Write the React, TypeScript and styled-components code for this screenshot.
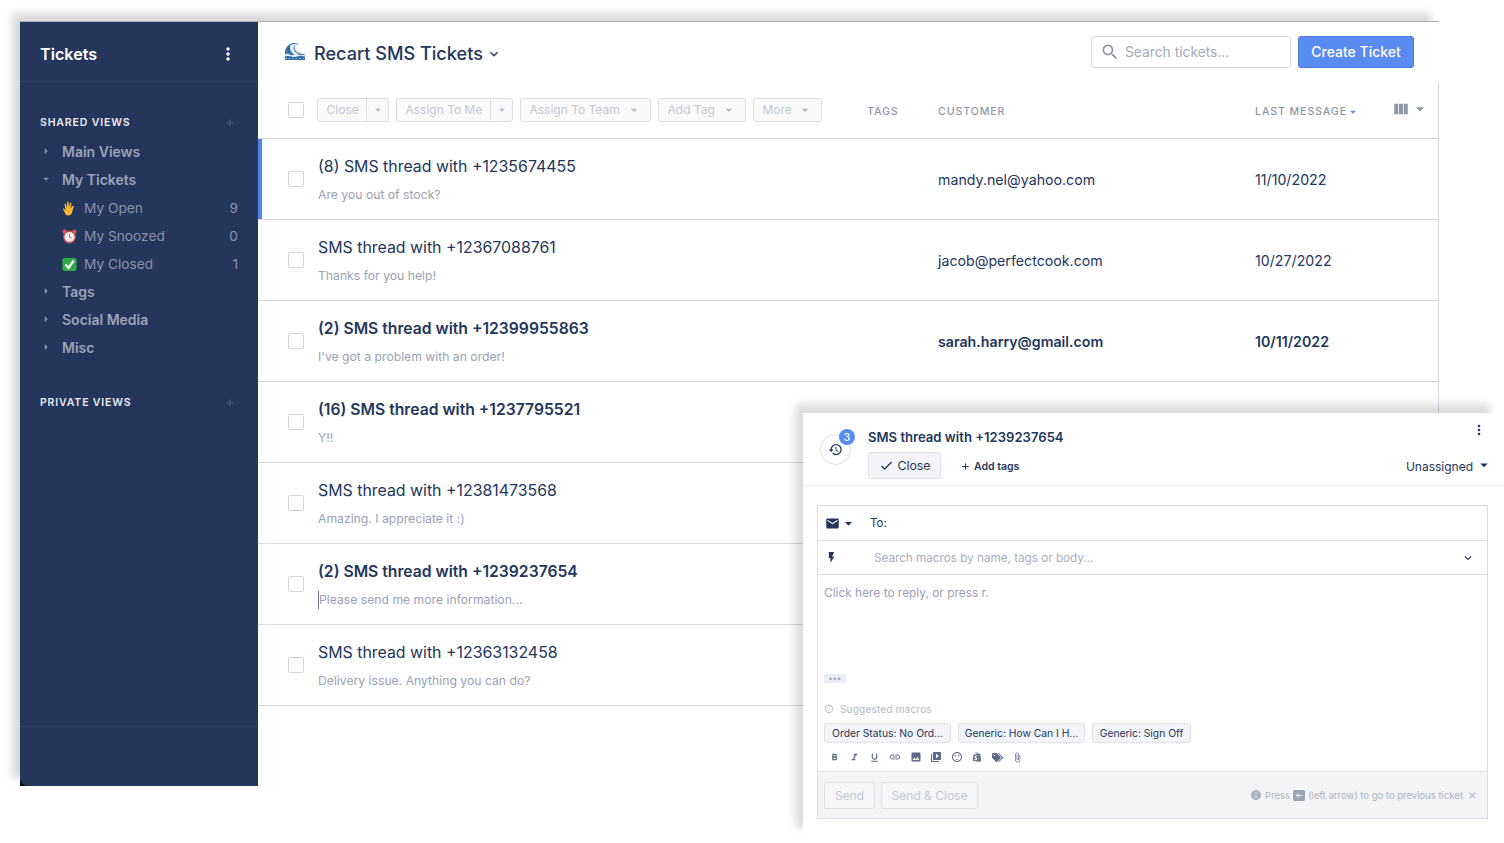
import React from "react";
import styled, { createGlobalStyle } from "styled-components";
import { FaShopify, FaTags } from "react-icons/fa";
import {
  MdAdd,
  MdArrowDropDown,
  MdAttachFile,
  MdCheck,
  MdClose,
  MdEmail,
  MdFlashOn,
  MdFormatBold,
  MdFormatItalic,
  MdFormatUnderlined,
  MdHistory,
  MdImage,
  MdInfo,
  MdInfoOutline,
  MdKeyboardArrowDown,
  MdLink,
  MdMoreVert,
  MdSearch,
  MdSentimentSatisfied,
  MdVideoLibrary,
  MdViewColumn,
} from "react-icons/md";

const tickets = [
  { subject: "(8) SMS thread with +1235674455", preview: "Are you out of stock?", customer: "mandy.nel@yahoo.com", date: "11/10/2022", active: true },
  { subject: "SMS thread with +12367088761", preview: "Thanks for you help!", customer: "jacob@perfectcook.com", date: "10/27/2022" },
  { subject: "(2) SMS thread with +12399955863", preview: "I've got a problem with an order!", customer: "sarah.harry@gmail.com", date: "10/11/2022", unread: true },
  { subject: "(16) SMS thread with +1237795521", preview: "Y!!", customer: "", date: "", unread: true },
  { subject: "SMS thread with +12381473568", preview: "Amazing. I appreciate it :)", customer: "", date: "" },
  { subject: "(2) SMS thread with +1239237654", preview: "Please send me more information...", customer: "", date: "", unread: true, typing: true },
  { subject: "SMS thread with +12363132458", preview: "Delivery issue. Anything you can do?", customer: "", date: "" },
];

const GlobalStyle = createGlobalStyle`
  html, body {
    margin: 0;
    padding: 0;
    background: #fff;
    font-family: Inter, "Liberation Sans", sans-serif;
  }
  * { box-sizing: border-box; }
`;

const Page = styled.div`
  position: relative;
  width: 1504px;
  height: 843px;
  overflow: hidden;
  padding: 21px 0 0 20px;
  background: #fff;
`;

const Frame = styled.div`
  display: flex;
  width: 1419px;
  height: 765px;
  box-shadow: -8px -8px 8px rgba(0, 0, 0, 0.15);
`;

const SidebarShell = styled.div`
  width: 238px;
  flex: none;
  display: flex;
  background: #05070d;
`;

const Sidebar = styled.aside`
  flex: 1;
  display: flex;
  flex-direction: column;
  background: #24365b;
  border-bottom-left-radius: 8px;
  border-top: 1px solid #a9adb6;
`;

const SideHeader = styled.div`
  height: 60px;
  flex: none;
  display: flex;
  align-items: center;
  justify-content: space-between;
  padding: 5px 20px 0;
  border-bottom: 1px solid #2d3f65;
  color: #fff;
  font-size: 16.2px;
  font-weight: 600;
  svg { margin-top: -1px; }
`;

const SideBody = styled.div`
  flex: 1;
  padding: 28px 20px 0;
`;

const SideSection = styled.div`
  margin-bottom: 29px;
`;

const SectionTitle = styled.div`
  display: flex;
  justify-content: space-between;
  align-items: center;
  height: 24px;
  margin-bottom: 3px;
  color: #e9ecf2;
  font-size: 10.5px;
  font-weight: 600;
  letter-spacing: 0.85px;
  svg { color: #4f5f80; margin-right: 2px; margin-top: 2px; }
`;

const NavGroup = styled.div`
  display: flex;
  align-items: center;
  height: 28px;
  color: #9aa4b7;
  font-size: 14px;
  font-weight: 600;
  svg { width: 14px; height: 14px; margin-left: -1px; margin-right: 9px; color: #8793a8; flex: none; }
`;

const Caret = styled(MdArrowDropDown)<{ $closed?: boolean }>`
  transform: ${(p) => (p.$closed ? "rotate(-90deg)" : "none")};
`;

const NavItem = styled.div`
  display: flex;
  align-items: center;
  height: 28px;
  padding: 2px 0 0 22px;
  color: #8793a8;
  font-size: 13.7px;
  svg { flex: none; margin-right: 7px; }
`;

const NavCount = styled.span`
  margin-left: auto;
`;

const SideFooter = styled.div`
  height: 60px;
  flex: none;
  border-top: 1px solid #2d3f65;
`;

const Main = styled.main`
  flex: 1;
  display: flex;
  flex-direction: column;
  background: #fff;
  border-top: 1px solid #a9adb6;
`;

const TopBar = styled.header`
  height: 61px;
  flex: none;
  display: flex;
  align-items: center;
  padding: 0 25px 2px 27px;
`;

const Title = styled.h1`
  margin: 3px 0 0 9px;
  color: #24365b;
  font-size: 18.1px;
  font-weight: 500;
`;

const TitleChevron = styled(MdKeyboardArrowDown)`
  color: #24365b;
  margin-left: 3px;
  margin-top: 5px;
`;

const Search = styled.div`
  margin-left: auto;
  width: 200px;
  height: 32px;
  display: flex;
  align-items: center;
  gap: 5px;
  padding-left: 8px;
  border: 1px solid #d5d8e1;
  border-radius: 3px;
  color: #a3a9b8;
  font-size: 13.8px;
  svg { color: #8d94a5; }
`;

const CreateButton = styled.button`
  width: 116px;
  height: 32px;
  margin-left: 7px;
  padding: 0;
  background: #5a8bf1;
  border: 1px solid #4a78e0;
  border-radius: 3px;
  color: #fff;
  font: 500 14px Inter, sans-serif;
`;

const Table = styled.div`
  flex: 1;
  border-right: 1px solid #d5d7e0;
  width: 1181px;
`;

const Toolbar = styled.div`
  height: 56px;
  display: flex;
  align-items: center;
  padding: 0 0 2px 30px;
  border-bottom: 1px solid #d5d7e0;
`;

const CheckBox = styled.span`
  display: block;
  flex: none;
  width: 16px;
  height: 16px;
  background: #fff;
  border: 1px solid #d2d5de;
  border-radius: 2px;
`;

const ActionGroup = styled.div`
  display: flex;
  flex: none;
  gap: 7px;
  margin-left: 13px;
  width: 550px;
`;

const Action = styled.div<{ $width: number }>`
  width: ${(p) => p.$width}px;
  height: 24px;
  display: flex;
  align-items: center;
  background: #fafafb;
  border: 1px solid #dcdde5;
  border-radius: 3px;
  color: #c3c7d1;
  font-size: 12px;
`;

const ActionLabel = styled.span`
  flex: 1;
  padding-left: 8.5px;
  display: flex;
  align-items: center;
  white-space: nowrap;
  svg { margin-left: auto; margin-right: 8px; color: #b4b8c4; }
`;

const ActionSplit = styled.span`
  width: 22px;
  flex: none;
  height: 22px;
  display: flex;
  align-items: center;
  justify-content: center;
  border-left: 1px solid #dcdde5;
  color: #b4b8c4;
`;

const HeadCell = styled.span<{ $width: number }>`
  width: ${(p) => p.$width}px;
  flex: none;
  display: flex;
  align-items: center;
  margin-top: 4px;
  color: #8f97a9;
  font-size: 10.6px;
  font-weight: 500;
  letter-spacing: 0.9px;
`;

const SortCaret = styled(MdArrowDropDown)`
  color: #5a8bf1;
  margin-left: -1px;
`;

const ColumnTools = styled.div`
  display: flex;
  align-items: center;
  color: #8f97a9;
  margin-top: -1px;
  margin-left: -2px;
`;

const Row = styled.div<{ $active?: boolean; $unread?: boolean }>`
  height: 81px;
  display: grid;
  grid-template-columns: 60px 620px 317px 1fr;
  align-items: center;
  border-bottom: 1px solid #d5d7e0;
  color: #24365b;
  font-weight: ${(p) => (p.$unread ? 600 : 400)};
  box-shadow: ${(p) => (p.$active ? "inset 4px 0 0 #4a85ea" : "none")};
`;

const RowCheck = styled(CheckBox)`
  margin-left: 30px;
`;

const RowText = styled.div`
  margin-top: 2px;
`;

const Subject = styled.div<{ $unread?: boolean }>`
  font-size: ${(p) => (p.$unread ? "15.7px" : "15.9px")};
  line-height: 20px;
`;

const Preview = styled.div<{ $typing?: boolean }>`
  margin-top: 9px;
  height: 18px;
  color: #9aa1b1;
  font-size: 12.2px;
  font-weight: 400;
  line-height: 18px;
  border-left: ${(p) => (p.$typing ? "1px solid #6b7488" : "0")};
`;

const Cell = styled.div`
  font-size: 14.2px;
`;

const Panel = styled.section`
  position: absolute;
  left: 803px;
  top: 413px;
  width: 701px;
  height: 430px;
  padding: 0 16px 0 14px;
  background: #fff;
  box-shadow: -11px -12px 8px -3px rgba(0, 0, 0, 0.14);
`;

const PanelHeader = styled.div`
  height: 73px;
  margin: 0 -16px 19px -14px;
  padding: 14px 16px 0 17px;
  display: flex;
  border-bottom: 1px solid #f0f1f4;
`;

const HistoryCircle = styled.div`
  position: relative;
  width: 31px;
  height: 31px;
  margin-top: 7px;
  flex: none;
  display: flex;
  align-items: center;
  justify-content: center;
  border: 1px solid #dfe1e7;
  border-radius: 50%;
  color: #24365b;
`;

const Badge = styled.span`
  position: absolute;
  top: -6px;
  right: -5px;
  width: 16px;
  height: 16px;
  display: flex;
  align-items: center;
  justify-content: center;
  border-radius: 50%;
  background: #5a8bf1;
  color: #fff;
  font-size: 10px;
  font-weight: 500;
`;

const PanelMain = styled.div`
  flex: 1;
  margin-left: 17px;
  display: flex;
  flex-direction: column;
`;

const PanelTitleRow = styled.div`
  display: flex;
  justify-content: space-between;
  align-items: flex-start;
  height: 25px;
  color: #24365b;
  font-size: 13.1px;
  font-weight: 600;
  line-height: 20px;
  svg { margin-right: 1px; margin-top: -5px; }
`;

const PanelActions = styled.div`
  display: flex;
  align-items: center;
  color: #24365b;
`;

const CloseButton = styled.div`
  width: 73px;
  height: 27px;
  display: flex;
  align-items: center;
  justify-content: center;
  gap: 4px;
  background: #f3f4f7;
  border: 1px solid #dfe1e7;
  border-radius: 3px;
  font-size: 12.3px;
`;

const AddTags = styled.div`
  display: flex;
  align-items: center;
  gap: 3px;
  margin: 1px 0 0 19px;
  font-size: 10.5px;
  font-weight: 600;
`;

const Assignee = styled.div`
  display: flex;
  align-items: center;
  margin: 1px -5px 0 auto;
  font-size: 12px;
  svg { margin-left: 2px; margin-top: -2px; }
`;

const Composer = styled.div`
  height: 314px;
  display: flex;
  flex-direction: column;
  border: 1px solid #dcdee6;
`;

const ComposerLine = styled.div<{ $tall?: boolean }>`
  height: ${(p) => (p.$tall ? 35 : 34)}px;
  flex: none;
  display: flex;
  align-items: center;
  padding: 0 12px 0 7px;
  border-bottom: 1px solid #dcdee6;
  color: #24365b;
`;

const LineIcon = styled.div`
  width: 45px;
  display: flex;
  align-items: center;
  flex: none;
`;

const ToLabel = styled.span`
  font-size: 11.5px;
`;

const MacroSearch = styled.span`
  color: #a8adbb;
  font-size: 11.7px;
  margin-left: 4px;
`;

const MacroChevron = styled(MdKeyboardArrowDown)`
  margin-left: auto;
`;

const ReplyArea = styled.div`
  flex: 1;
  display: flex;
  flex-direction: column;
  padding: 10px 6px 0;
`;

const ReplyHint = styled.div`
  height: 16px;
  color: #9aa1b1;
  font-size: 11.9px;
  line-height: 16px;
`;

const QuoteChip = styled.div`
  width: 22px;
  height: 9px;
  margin-top: 73px;
  display: flex;
  align-items: center;
  justify-content: center;
  background: #e9edf9;
  border-radius: 1px;
  color: #a0a7bb;
  font-size: 8px;
  font-weight: 700;
  letter-spacing: 0.5px;
  line-height: 9px;
`;

const SuggestedLabel = styled.div`
  margin-top: 20px;
  height: 12px;
  display: flex;
  align-items: center;
  gap: 6px;
  color: #b4b9c6;
  font-size: 10px;
  letter-spacing: 0.2px;
`;

const MacroRow = styled.div`
  display: flex;
  gap: 7px;
  margin-top: 8px;
`;

const MacroChip = styled.span<{ $width: number }>`
  width: ${(p) => p.$width}px;
  height: 20px;
  display: flex;
  align-items: center;
  justify-content: center;
  background: #f3f4f7;
  border: 1px solid #dfe1e7;
  border-radius: 3px;
  color: #24365b;
  font-size: 10.3px;
  white-space: nowrap;
`;

const FormatBar = styled.div`
  display: flex;
  align-items: center;
  margin-top: 5px;
  height: 18px;
  color: #5d6a85;
`;

const FormatSlot = styled.span`
  width: 20.4px;
  display: flex;
  justify-content: center;
  flex: none;
`;

const ComposerFooter = styled.div`
  height: 47px;
  flex: none;
  display: flex;
  align-items: center;
  padding: 0 9px 0 6px;
  background: #f3f4f6;
  border-top: 1px solid #dcdee6;
`;

const GhostButton = styled.div<{ $width: number }>`
  width: ${(p) => p.$width}px;
  height: 27px;
  margin-right: 6px;
  display: flex;
  align-items: center;
  justify-content: center;
  border: 1px solid #dfe1e7;
  border-radius: 3px;
  background: #f5f6f8;
  color: #c6cad4;
  font-size: 12px;
`;

const ShortcutHint = styled.div`
  margin-left: auto;
  display: flex;
  align-items: center;
  color: #adb3c1;
  font-size: 9.5px;
  gap: 3px;
`;

const HintClose = styled(MdClose)`
  margin-left: 1px;
`;

const KeyCap = styled.span`
  width: 12px;
  height: 11px;
  display: flex;
  align-items: center;
  justify-content: center;
  background: #9aa2b3;
  border-radius: 2px;
  color: #fff;
  font-size: 8px;
  line-height: 8px;
`;

function WaveEmoji() {
  return (
    <svg width="20" height="17" viewBox="0 0 20 17">
      <path d="M0 17V8C1 3 5 0 9 0c2 0 4 .6 5 1.500-2.500-.3-4.500 1-4.500 3.200 0 3 3.500 5 6 5.800l4.500.8V17z" fill="#3b78ad" />
      <path d="M5 2.500C7 .8 10 .5 13 1.300 10.500 1.500 8.500 3 8.500 5c0 3 2.500 5 5 6l-3 .8C6.500 10.500 4 6 5 2.500z" fill="#e6eef5" />
      <path d="M2 7c1-2 2-3 3-4 0 2-.5 4 0 6z" fill="#1f5b96" />
      <path d="M0 11.500c1.500-1 3-1 4.500 0s3 1 4.500 0 3-1 4.500 0 3.500 1 6.500 0V14H0z" fill="#dce8f2" />
      <path d="M0 13.500c2-.8 4-.8 6 0s4 .8 6 0 5-.8 8 0V17H0z" fill="#2b6aa3" />
      <path d="M0 15.500h20" stroke="#b9d2e8" strokeWidth="0.700" strokeDasharray="2 1.500" />
    </svg>
  );
}

function HandEmoji() {
  return (
    <svg width="15" height="15" viewBox="0 0 15 15">
      <path
        d="M4 14 1.200 8.600c-.4-.8.7-1.400 1.200-.7l1.300 1.800L2.500 3.300c-.2-.9 1-1.200 1.300-.3l1.100 3.600L5.200 1.200c0-.9 1.300-.9 1.400 0l.5 5.100 1-4.300c.2-.9 1.400-.6 1.300.3l-.7 5 1.900-2.200c.6-.7 1.600.1 1.100.9L9.800 12c-.6 1-1.200 2-2.500 2.300-1.200.3-2.500.2-3.300-.3z"
        fill="#f7b733"
      />
    </svg>
  );
}

function ClockEmoji() {
  return (
    <svg width="15" height="15" viewBox="0 0 15 15">
      <circle cx="2.700" cy="2.800" r="2.200" fill="#d9564f" />
      <circle cx="12.300" cy="2.800" r="2.200" fill="#d9564f" />
      <circle cx="7.500" cy="8" r="6.500" fill="#c9534e" />
      <circle cx="7.500" cy="8" r="5" fill="#efeaea" />
      <path d="M7.500 4.800V8l2.200 1" stroke="#666" strokeWidth="0.800" fill="none" />
    </svg>
  );
}

function CheckEmoji() {
  return (
    <svg width="15" height="15" viewBox="0 0 15 15">
      <rect x="0.500" y="1" width="14" height="13" rx="2" fill="#2fae45" />
      <path d="M3.500 7.500 6.500 11 11.800 3.500" stroke="#fff" strokeWidth="2.200" fill="none" />
    </svg>
  );
}

function Dropdown({ label, width, split }: { label: string; width: number; split?: boolean }) {
  return (
    <Action $width={width}>
      <ActionLabel>
        {label}
        {!split && <MdArrowDropDown size={16} />}
      </ActionLabel>
      {split && (
        <ActionSplit>
          <MdArrowDropDown size={14} />
        </ActionSplit>
      )}
    </Action>
  );
}

export default function App() {
  return (
    <Page>
      <GlobalStyle />
      <Frame>
        <SidebarShell>
          <Sidebar>
            <SideHeader>
              Tickets
              <MdMoreVert size={20} />
            </SideHeader>
            <SideBody>
              <SideSection>
                <SectionTitle>
                  SHARED VIEWS
                  <MdAdd size={12} />
                </SectionTitle>
                <NavGroup>
                  <Caret $closed />
                  Main Views
                </NavGroup>
                <NavGroup>
                  <Caret />
                  My Tickets
                </NavGroup>
                <NavItem>
                  <HandEmoji />
                  My Open
                  <NavCount>9</NavCount>
                </NavItem>
                <NavItem>
                  <ClockEmoji />
                  My Snoozed
                  <NavCount>0</NavCount>
                </NavItem>
                <NavItem>
                  <CheckEmoji />
                  My Closed
                  <NavCount>1</NavCount>
                </NavItem>
                <NavGroup>
                  <Caret $closed />
                  Tags
                </NavGroup>
                <NavGroup>
                  <Caret $closed />
                  Social Media
                </NavGroup>
                <NavGroup>
                  <Caret $closed />
                  Misc
                </NavGroup>
              </SideSection>
              <SideSection>
                <SectionTitle>
                  PRIVATE VIEWS
                  <MdAdd size={12} />
                </SectionTitle>
              </SideSection>
            </SideBody>
            <SideFooter />
          </Sidebar>
        </SidebarShell>
        <Main>
          <TopBar>
            <WaveEmoji />
            <Title>Recart SMS Tickets</Title>
            <TitleChevron size={16} />
            <Search>
              <MdSearch size={20} />
              Search tickets...
            </Search>
            <CreateButton>Create Ticket</CreateButton>
          </TopBar>
          <Table>
            <Toolbar>
              <CheckBox />
              <ActionGroup>
                <Dropdown label="Close" width={72} split />
                <Dropdown label="Assign To Me" width={117} split />
                <Dropdown label="Assign To Team" width={131} />
                <Dropdown label="Add Tag" width={88} />
                <Dropdown label="More" width={69} />
              </ActionGroup>
              <HeadCell $width={71}>TAGS</HeadCell>
              <HeadCell $width={317}>CUSTOMER</HeadCell>
              <HeadCell $width={139}>
                LAST MESSAGE
                <SortCaret size={14} />
              </HeadCell>
              <ColumnTools>
                <MdViewColumn size={18} />
                <MdArrowDropDown size={20} />
              </ColumnTools>
            </Toolbar>
            {tickets.map((ticket) => (
              <Row key={ticket.subject} $active={ticket.active} $unread={ticket.unread}>
                <RowCheck />
                <RowText>
                  <Subject $unread={ticket.unread}>{ticket.subject}</Subject>
                  <Preview $typing={ticket.typing}>{ticket.preview}</Preview>
                </RowText>
                <Cell>{ticket.customer}</Cell>
                <Cell>{ticket.date}</Cell>
              </Row>
            ))}
          </Table>
        </Main>
      </Frame>
      <Panel>
        <PanelHeader>
          <HistoryCircle>
            <MdHistory size={15} />
            <Badge>3</Badge>
          </HistoryCircle>
          <PanelMain>
            <PanelTitleRow>
              SMS thread with +1239237654
              <MdMoreVert size={16} />
            </PanelTitleRow>
            <PanelActions>
              <CloseButton>
                <MdCheck size={15} />
                Close
              </CloseButton>
              <AddTags>
                <MdAdd size={11} />
                Add tags
              </AddTags>
              <Assignee>
                Unassigned
                <MdArrowDropDown size={18} />
              </Assignee>
            </PanelActions>
          </PanelMain>
        </PanelHeader>
        <Composer>
          <ComposerLine $tall>
            <LineIcon>
              <MdEmail size={15} />
              <MdArrowDropDown size={17} />
            </LineIcon>
            <ToLabel>To:</ToLabel>
          </ComposerLine>
          <ComposerLine>
            <LineIcon>
              <MdFlashOn size={13} />
            </LineIcon>
            <MacroSearch>Search macros by name, tags or body...</MacroSearch>
            <MacroChevron size={14} />
          </ComposerLine>
          <ReplyArea>
            <ReplyHint>Click here to reply, or press r.</ReplyHint>
            <QuoteChip>•••</QuoteChip>
            <SuggestedLabel>
              <MdInfoOutline size={10} />
              Suggested macros
            </SuggestedLabel>
            <MacroRow>
              <MacroChip $width={127}>Order Status: No Ord...</MacroChip>
              <MacroChip $width={127}>Generic: How Can I H...</MacroChip>
              <MacroChip $width={99}>Generic: Sign Off</MacroChip>
            </MacroRow>
            <FormatBar>
              <FormatSlot><MdFormatBold size={11} /></FormatSlot>
              <FormatSlot><MdFormatItalic size={11} /></FormatSlot>
              <FormatSlot><MdFormatUnderlined size={11} /></FormatSlot>
              <FormatSlot><MdLink size={12} /></FormatSlot>
              <FormatSlot><MdImage size={12} /></FormatSlot>
              <FormatSlot><MdVideoLibrary size={12} /></FormatSlot>
              <FormatSlot><MdSentimentSatisfied size={12} /></FormatSlot>
              <FormatSlot><FaShopify size={10} /></FormatSlot>
              <FormatSlot><FaTags size={11} /></FormatSlot>
              <FormatSlot><MdAttachFile size={11} /></FormatSlot>
            </FormatBar>
          </ReplyArea>
          <ComposerFooter>
            <GhostButton $width={51}>Send</GhostButton>
            <GhostButton $width={97}>Send &amp; Close</GhostButton>
            <ShortcutHint>
              <MdInfo size={12} />
              Press
              <KeyCap>←</KeyCap>
              (left arrow) to go to previous ticket
              <HintClose size={11} />
            </ShortcutHint>
          </ComposerFooter>
        </Composer>
      </Panel>
    </Page>
  );
}
